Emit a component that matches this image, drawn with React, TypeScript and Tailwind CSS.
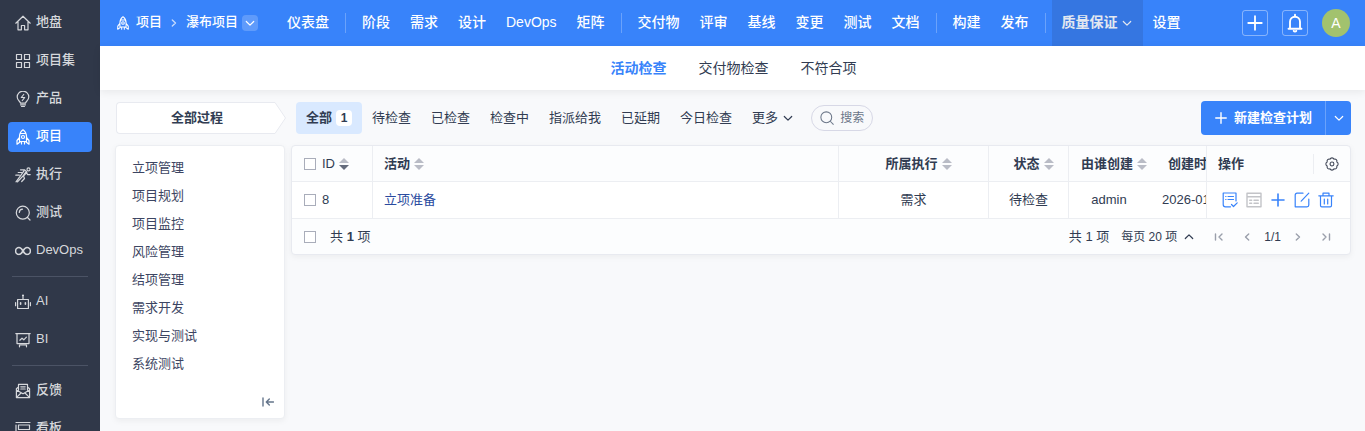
import React from "react";

type IconProps = { className?: string };

function Svg({ className = "size-4", children, box = 16 }: IconProps & { children: React.ReactNode; box?: number }) {
  return (
    <svg
      viewBox={`0 0 ${box} ${box}`}
      className={`shrink-0 ${className}`}
      fill="none"
      stroke="currentColor"
      strokeWidth="1.2"
      strokeLinecap="round"
      strokeLinejoin="round"
      aria-hidden="true"
    >
      {children}
    </svg>
  );
}

const HomeIcon = () => (
  <Svg>
    <path d="M.8 8.2 8 1.2l7.2 7M3 6.800v8h3.400v-4.300h3.200v4.300H13v-8" />
  </Svg>
);
const GridIcon = () => (
  <Svg>
    <path d="M1.500 1.500h5v5h-5zM9.500 1.500h5v5h-5zM1.500 9.500h5v5h-5zM9.500 9.500h5v5h-5z" />
  </Svg>
);
const BulbIcon = () => (
  <Svg>
    <path d="M5.500 12.200c0-1.800-3.300-2.600-3.300-6.200a5.800 5.800 0 0 1 11.600 0c0 3.600-3.300 4.400-3.300 6.200zM5.500 13.800h5M6.500 15.500h3M8.700 3.500 6.300 6.500h3.400L7.300 9.500" />
  </Svg>
);
const RocketIcon = ({ className }: IconProps) => (
  <Svg className={className}>
    <path d="M8 .8C5.600 2.700 4.500 5 4.500 7.500v5h7v-5C11.500 5 10.400 2.700 8 .8zM4.500 8.500l-2.500 3v3.700l3-2.200M11.500 8.500l2.500 3v3.700L11 13M6.500 12.800V15M9.500 12.800V15M5.300 4.500h5.400" />
    <circle cx="8" cy="8" r="1.500" />
  </Svg>
);
const RunIcon = () => (
  <Svg>
    <circle cx="13.500" cy="2.400" r="1.500" />
    <path d="M5.500 2.800h4.200L12 5.200 8.500 9l1 2.500-2.800 3M9 3.800 5.800 8.300 1 14.800M11.500 5.800l1.200 1.800h2.500M7.500 9.500l-5 5.300M3.200 5.500h3.500M.8 8.200h3.500M10.800 5.200 7.500 9.500" />
  </Svg>
);
const TestIcon = () => (
  <Svg>
    <circle cx="7.800" cy="7.700" r="6.500" />
    <path d="m12.500 12.500 2.500 2.500M4.300 7.500A3.500 3.500 0 0 1 7.500 4.200" />
  </Svg>
);
const InfinityIcon = () => (
  <Svg>
    <path d="M8 8C6.700 5.800 5.500 4.600 4 4.600a3.400 3.400 0 0 0 0 6.800c1.500 0 2.700-1.200 4-3.400s2.500-3.400 4-3.400a3.400 3.400 0 0 1 0 6.800c-1.500 0-2.700-1.200-4-3.400z" strokeWidth="1.500" />
  </Svg>
);
const RobotIcon = () => (
  <Svg>
    <path d="M2.600 5.500h10.800v9H2.600zM8 2.500v3M.6 8.500v3.200M15.400 8.500v3.200" />
    <circle cx="8" cy="1.500" r=".5" />
    <path d="M5.600 8.800v1.400M10.400 8.800v1.400" strokeWidth="1.600" />
  </Svg>
);
const BoardIcon = () => (
  <Svg>
    <path d="M.8 1.600h14.400M2 1.600v10h12v-10M4.800 8.200l2.200-2 1.800 1.600 2.600-2.600M4.500 14.800V13h7v1.800" />
  </Svg>
);
const MailIcon = () => (
  <Svg>
    <path d="M3.500 7V1.400h9V7M3.500 4 1.400 5.800v8.800h13.200V5.800L12.500 4M1.400 7 8 10.800 14.600 7M1.800 14.200 6 10M14.200 14.200 10 10M5.800 3.800h4.400M5.800 6h4.400" />
  </Svg>
);
const KanbanIcon = () => (
  <Svg>
    <path d="M1 1.500h14M3.500 4h11v4.500h-11zM1 4v8M3.500 11h11v3h-11z" />
  </Svg>
);
const PlusIcon = ({ className }: IconProps) => (
  <Svg className={className}>
    <path d="M8 2v12M2 8h12" strokeWidth="1.600" />
  </Svg>
);
const BellIcon = () => (
  <Svg className="size-5">
    <path d="M2.800 12.600h10.400M4 12.400V7a4 4 0 0 1 8 0v5.400M8 1.300v1.500M7 14.300a1.200 1.200 0 0 0 2 0" strokeWidth="1.500" />
  </Svg>
);
const Chevron = ({ className = "size-3" }: IconProps) => (
  <Svg className={className} box={12}>
    <path d="m2.300 4.500 3.700 3.700 3.700-3.700" />
  </Svg>
);
const Angle = ({ className = "size-3" }: IconProps) => (
  <Svg className={className} box={12}>
    <path d="M4.300 3 7.500 6 4.300 9" strokeWidth="1.400" />
  </Svg>
);
const SearchIcon = () => (
  <Svg className="size-[14px]">
    <circle cx="7.200" cy="7.200" r="6.200" />
    <path d="m12 12 3.200 3.200" />
  </Svg>
);
const GearIcon = () => (
  <Svg className="size-[14px]">
    <path d="M13.500 5.700a2.500 2.500 0 0 1 0 4.600 2.500 2.500 0 0 1-3.200 3.200 2.500 2.500 0 0 1-4.600 0 2.500 2.500 0 0 1-3.200-3.200 2.500 2.500 0 0 1 0-4.600 2.500 2.500 0 0 1 3.200-3.200 2.500 2.500 0 0 1 4.600 0 2.500 2.500 0 0 1 3.200 3.200z" />
    <circle cx="8" cy="8" r="2.200" />
  </Svg>
);

const ChecklistIcon = () => (
  <Svg>
    <path d="M14 9V1H1.200v11.500c0 1.500.8 2.300 2.300 2.300h5M3.700 4.500h.3M6 4.500h5.500M3.700 7.500h.3M6 7.500h5.500M9.500 12.500l2 2 3.700-3.700" />
  </Svg>
);
const FormIcon = () => (
  <Svg>
    <path d="M1 1.300h14v13.400H1zM1 4.800h14M3.700 8.200h2M8 8.200h4.300M3.700 11.300h2M8 11.300h4.300" strokeWidth="1.400" />
  </Svg>
);
const EditIcon = () => (
  <Svg>
    <path d="M9 1.200H3A1.800 1.800 0 0 0 1.200 3v11.800h11.800a1.800 1.800 0 0 0 1.800-1.800V7M14.800 1.200 7.200 9.200" />
  </Svg>
);
const TrashIcon = () => (
  <Svg>
    <path d="M.8 3.800h14.400M5 3.500V1.200h6v2.300M2.500 4v9.500c0 .8.500 1.300 1.300 1.300h8.400c.8 0 1.300-.5 1.300-1.300V4M6.300 7v5M9.700 7v5" />
  </Svg>
);

type SideItem = { label: string; icon: React.ReactNode; active?: boolean };

const sideGroups: SideItem[][] = [
  [
    { label: "地盘", icon: <HomeIcon /> },
    { label: "项目集", icon: <GridIcon /> },
    { label: "产品", icon: <BulbIcon /> },
    { label: "项目", icon: <RocketIcon />, active: true },
    { label: "执行", icon: <RunIcon /> },
    { label: "测试", icon: <TestIcon /> },
    { label: "DevOps", icon: <InfinityIcon /> },
  ],
  [
    { label: "AI", icon: <RobotIcon /> },
    { label: "BI", icon: <BoardIcon /> },
  ],
  [
    { label: "反馈", icon: <MailIcon /> },
    { label: "看板", icon: <KanbanIcon /> },
  ],
];

const navGroups = [
  ["仪表盘"],
  ["阶段", "需求", "设计", "DevOps", "矩阵"],
  ["交付物", "评审", "基线", "变更", "测试", "文档"],
  ["构建", "发布"],
];

const processes = ["立项管理", "项目规划", "项目监控", "风险管理", "结项管理", "需求开发", "实现与测试", "系统测试"];
const filters = ["待检查", "已检查", "检查中", "指派给我", "已延期", "今日检查"];

function Sidebar() {
  return (
    <nav className="flex w-[100px] shrink-0 flex-col gap-2 overflow-hidden bg-[#303849] px-2 pt-2">
      {sideGroups.map((group, i) => (
        <React.Fragment key={i}>
          {i > 0 && <hr className="mx-1 my-[2px] border-[#4b5365]" />}
          {group.map((item) => (
            <a
              key={item.label}
              href="#"
              className={`flex h-[30px] shrink-0 items-center gap-[5px] rounded pl-[7px] font-medium ${
                item.active ? "bg-[#3883fa] text-white" : "text-[#d6d8dc]"
              }`}
            >
              {item.icon}
              <span className="pb-[2px] whitespace-nowrap">{item.label}</span>
            </a>
          ))}
        </React.Fragment>
      ))}
    </nav>
  );
}

const NavDivider = () => <span className="ml-[6px] h-5 w-[7px] border-l border-white/25" />;

function Header() {
  return (
    <header className="flex h-[46px] shrink-0 items-center bg-[#3883fa] pr-[15px] text-white">
      <div className="flex w-[177px] shrink-0 items-center pl-4 font-medium">
        <RocketIcon className="size-[14px]" />
        <a href="#" className="ml-[6px] pb-[2px]">项目</a>
        <Angle className="mx-[6px] size-3 opacity-70" />
        <a href="#" className="pb-[2px]">瀑布项目</a>
        <button type="button" aria-label="瀑布项目" className="ml-1 flex size-4 items-center justify-center rounded-sm bg-white/20">
          <Chevron />
        </button>
      </div>
      <nav className="flex h-full flex-1 items-center text-sm font-medium whitespace-nowrap">
        {navGroups.map((group, i) => (
          <React.Fragment key={i}>
            {group.map((label) => (
              <a key={label} href="#" className="px-[10px] pb-[3px]">
                {label}
              </a>
            ))}
            <NavDivider />
          </React.Fragment>
        ))}
        <a href="#" className="flex h-full items-center gap-[3px] bg-[#3576e1] px-[10px] font-bold text-[#e3e8f0]">
          <span className="pb-[3px]">质量保证</span>
          <Chevron />
        </a>
        <a href="#" className="px-[10px] pb-[3px]">设置</a>
      </nav>
      <div className="flex items-center gap-[14px]">
        <button type="button" aria-label="添加" className="flex size-[26px] items-center justify-center rounded-[3px] border border-white/40">
          <PlusIcon className="size-[18px]" />
        </button>
        <button type="button" aria-label="通知" className="flex size-[26px] items-center justify-center rounded-[3px] border border-white/40">
          <BellIcon />
        </button>
        <button type="button" className="flex size-7 items-center justify-center rounded-full bg-[#a2c26e] text-sm">
          A
        </button>
      </div>
    </header>
  );
}

function SortMark({ desc = false }: { desc?: boolean }) {
  return (
    <svg viewBox="0 0 10 12" className="h-3 w-[10px] shrink-0" aria-hidden="true">
      <path d="M5 0 10 5H0z" fill="#b9bcc6" />
      <path d="M5 12 0 7h10z" fill={desc ? "#646b7c" : "#b9bcc6"} />
    </svg>
  );
}

function Check({ label }: { label: string }) {
  return (
    <input
      type="checkbox"
      aria-label={label}
      className="size-3 shrink-0 appearance-none border border-[#a9adba] bg-white"
    />
  );
}

function Toolbar() {
  return (
    <div className="flex h-[34px] items-center pl-px">
      <button type="button" className="flex h-8 w-[170px] shrink-0">
        <span className="flex h-8 flex-1 items-center justify-center rounded-l-sm border border-r-0 border-[#e8eaf0] bg-white pl-[2px] font-bold">
          全部过程
        </span>
        <svg viewBox="0 0 11 32" className="h-8 w-[11px]" aria-hidden="true">
          <path d="M0 .5 10.500 16 0 31.500" fill="#fff" stroke="#e8eaf0" />
        </svg>
      </button>
      <div className="ml-[10px] flex items-center whitespace-nowrap">
        <button type="button" className="flex h-8 items-center gap-1 rounded-sm bg-[#d9e9ff] px-[10px] font-bold">
          全部
          <span className="flex h-4 w-4 items-center justify-center rounded bg-white text-xs">1</span>
        </button>
        {filters.map((label) => (
          <button key={label} type="button" className="h-8 px-[10px]">
            {label}
          </button>
        ))}
        <button type="button" className="flex h-8 items-center gap-1 px-[10px]">
          更多
          <Chevron />
        </button>
      </div>
      <button type="button" className="ml-[7px] flex h-[26px] shrink-0 items-center gap-[6px] rounded-full border border-[#d7d8e6] px-2 text-xs text-[#6b7688]">
        <SearchIcon />
        搜索
      </button>
      <div className="ml-auto flex h-[34px] shrink-0 rounded bg-[#3883fa] font-medium text-white">
        <button type="button" className="flex items-center gap-[6px] px-[13px] font-bold">
          <PlusIcon className="size-[14px]" />
          新建检查计划
        </button>
        <button type="button" aria-label="更多操作" className="flex w-[26px] items-center justify-center border-l border-white/25">
          <Chevron />
        </button>
      </div>
    </div>
  );
}

function ProcessPanel() {
  return (
    <aside className="flex w-[170px] shrink-0 flex-col rounded border border-[#eceef2] bg-white pt-2 pb-[8px] pl-4 shadow-[0_2px_6px_rgba(0,0,0,0.05)]">
      {processes.map((name) => (
        <a key={name} href="#" className="flex h-7 items-center text-[#3c4562]">
          {name}
        </a>
      ))}
      <button type="button" aria-label="收起" className="mt-4 mr-2 flex size-4 items-center justify-center self-end text-[#64758b]">
        <Svg className="size-3" box={12}>
          <path d="M1 2v8M11.500 6H4.500M7.300 3 4.300 6l3 3" strokeWidth="1.400" />
        </Svg>
      </button>
    </aside>
  );
}

const rowActions = [
  { label: "检查", icon: <ChecklistIcon />, tone: "text-[#3883fa]" },
  { label: "查看", icon: <FormIcon />, tone: "text-[#c3c4c8]" },
  { label: "添加", icon: <PlusIcon />, tone: "text-[#3883fa]" },
  { label: "编辑", icon: <EditIcon />, tone: "text-[#3883fa]" },
  { label: "删除", icon: <TrashIcon />, tone: "text-[#3883fa]" },
];

const edge = "border-r border-[#eceef2]";
const centeredHead = "flex items-center justify-center gap-1 pl-[10px]";

function PlanTable() {
  return (
    <section className="min-w-0 flex-1 self-start rounded border border-[#e8eaf0] bg-[#fcfdfe] shadow-[0_2px_6px_rgba(0,0,0,0.05)]">
      <table className="w-full table-fixed border-separate border-spacing-0 whitespace-nowrap">
        <colgroup>
          <col className="w-[81px]" />
          <col />
          <col className="w-[150px]" />
          <col className="w-[80px]" />
          <col className="w-[80px]" />
          <col className="w-[58px]" />
          <col className="w-[143px]" />
        </colgroup>
        <thead>
          <tr className="h-9 *:border-b *:border-[#eceef2] *:p-0 *:font-bold">
            <th className={edge}>
              <div className="flex items-center gap-[6px] pl-3">
                <Check label="全选" />
                <span className="flex items-center gap-1 font-medium">
                  ID
                  <SortMark desc />
                </span>
              </div>
            </th>
            <th className={edge}>
              <div className="flex items-center gap-1 pl-[11px]">
                活动
                <SortMark />
              </div>
            </th>
            <th className={edge}>
              <div className={centeredHead}>
                所属执行
                <SortMark />
              </div>
            </th>
            <th className={edge}>
              <div className={centeredHead}>
                状态
                <SortMark />
              </div>
            </th>
            <th>
              <div className={centeredHead}>
                由谁创建
                <SortMark />
              </div>
            </th>
            <th className={`overflow-hidden text-left ${edge}`}>
              <div className="pl-[19px]">创建时</div>
            </th>
            <th>
              <div className="flex items-center justify-between pl-[11px]">
                操作
                <button type="button" aria-label="列设置" className="flex h-5 w-[37px] items-center justify-center border-l border-[#eceef2] text-[#3c4353]">
                  <GearIcon />
                </button>
              </div>
            </th>
          </tr>
        </thead>
        <tbody>
          <tr className="h-[37px] bg-white text-center *:border-b *:border-[#eceef2] *:p-0">
            <td className={edge}>
              <div className="flex items-center gap-[6px] pl-3">
                <Check label="选择 8" />
                8
              </div>
            </td>
            <td className={`text-left ${edge}`}>
              <a href="#" className="pl-[11px] text-[#2a4a9e]">
                立项准备
              </a>
            </td>
            <td className={edge}>需求</td>
            <td className={edge}>待检查</td>
            <td>admin</td>
            <td className={`overflow-hidden text-left ${edge}`}>
              <div className="pl-[13px]">2026-01</div>
            </td>
            <td>
              <div className="flex items-center gap-2 pl-[15px]">
                {rowActions.map((action) => (
                  <button key={action.label} type="button" aria-label={action.label} className={action.tone}>
                    {action.icon}
                  </button>
                ))}
              </div>
            </td>
          </tr>
        </tbody>
      </table>
      <footer className="flex h-[35px] items-center pr-[18px] pl-3">
        <Check label="选择全部" />
        <span className="ml-[14px]">
          共 <b>1</b> 项
        </span>
        <span className="ml-auto">共 1 项</span>
        <button type="button" className="ml-3 flex items-center gap-[6px] text-xs">
          每页 20 项
          <Chevron className="size-3 rotate-180" />
        </button>
        <button type="button" aria-label="第一页" className="ml-[18px] text-[#9a9fab]">
          <Svg className="size-3" box={12}>
            <path d="M2.500 3v6M9 3 6 6l3 3" strokeWidth="1.400" />
          </Svg>
        </button>
        <button type="button" aria-label="上一页" className="ml-4 text-[#9a9fab]">
          <Angle className="size-3 rotate-180" />
        </button>
        <span className="mx-[11px] text-xs">1/1</span>
        <button type="button" aria-label="下一页" className="text-[#9a9fab]">
          <Angle />
        </button>
        <button type="button" aria-label="最后一页" className="ml-4 text-[#9a9fab]">
          <Svg className="size-3" box={12}>
            <path d="M9.500 3v6M3 3l3 3-3 3" strokeWidth="1.400" />
          </Svg>
        </button>
      </footer>
    </section>
  );
}

export default function App() {
  return (
    <div className="flex h-screen overflow-hidden bg-[#f8f9fb] font-['Liberation_Sans','Noto_Sans_CJK_SC',sans-serif] text-[13px] leading-5 text-[#313c52]">
      <Sidebar />
      <div className="flex min-w-0 flex-1 flex-col">
        <Header />
        <nav className="flex h-11 shrink-0 items-center justify-center gap-8 bg-white pl-[2px] text-sm shadow-[0_2px_8px_rgba(0,0,0,0.07)]">
          <a href="#" className="font-bold text-[#3883fa]">活动检查</a>
          <a href="#">交付物检查</a>
          <a href="#">不符合项</a>
        </nav>
        <main className="flex flex-col gap-[10px] pt-[11px] pr-[14px] pl-[15px]">
          <Toolbar />
          <div className="flex gap-[6px]">
            <ProcessPanel />
            <PlanTable />
          </div>
        </main>
      </div>
    </div>
  );
}
